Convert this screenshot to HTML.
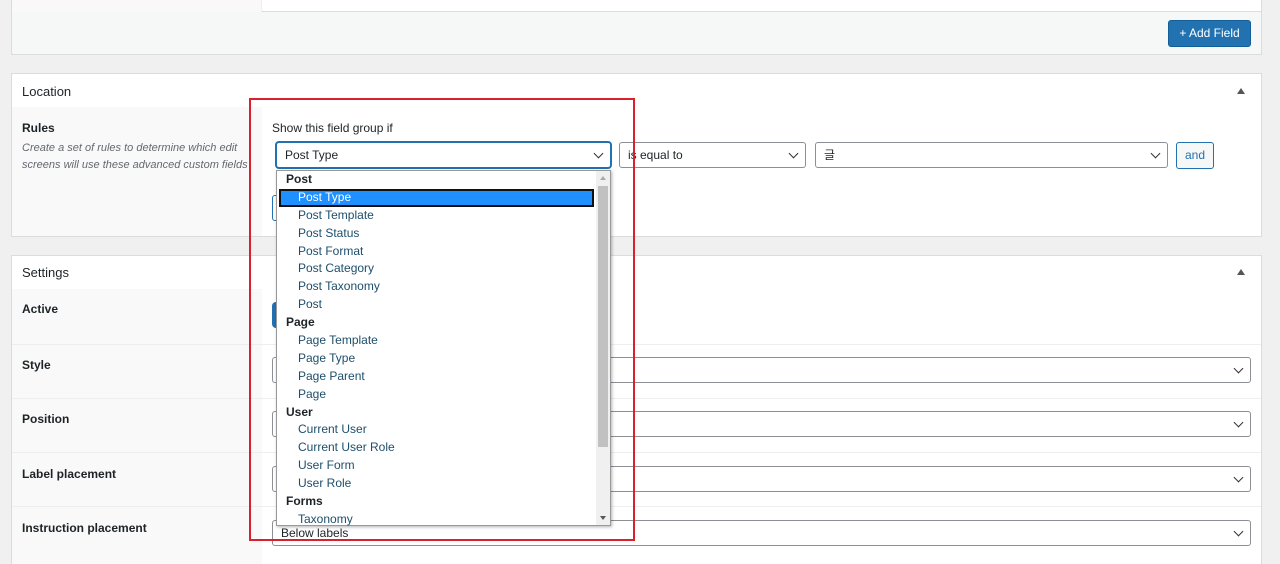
<!DOCTYPE html>
<html style="overflow:hidden;height:564px"><head><meta charset="utf-8"><style>
*{box-sizing:border-box;margin:0;padding:0}
body{width:1280px;height:564px;overflow:hidden;background:#f0f0f1;font-family:"Liberation Sans","Noto Sans CJK KR",sans-serif;font-size:12px;color:#1d2327;position:relative}
.abs{position:absolute}
.panel{position:absolute;left:11px;width:1251px;background:#fff;border:1px solid #dcdcde}
.lbl{position:absolute;left:22px;font-weight:bold;font-size:12px}
.sel{position:absolute;height:26px;border:1px solid #8c8f94;border-radius:3px;background:#fff;padding-left:8px;line-height:24px;font-size:12px}
.sel:after{content:"";position:absolute;right:8px;top:7px;width:6px;height:6px;border-right:1px solid #333;border-bottom:1px solid #333;transform:rotate(45deg)}
.row{position:absolute;left:0;width:1249px;border-top:1px solid #eee}
.leftcol{position:absolute;left:0;width:250px;background:#f9f9f9}
.dd{position:absolute;left:276px;top:170px;width:335px;height:356px;background:#fff;border:1px solid #999;box-shadow:1px 1px 3px rgba(0,0,0,.3);font-size:12px}
.dd div{height:17.9px;line-height:17.9px;padding-left:21px;color:#1d4e6b}
.dd div.g{padding-left:9px;font-weight:bold;color:#1d2327}
.tri{position:absolute;right:16px;width:0;height:0;border-left:4px solid transparent;border-right:4px solid transparent;border-bottom:6px solid #555}
</style></head><body>

<div class="panel" style="top:-2px;height:57px;background:#f6f7f7">
  <div class="abs" style="left:0;top:0;width:1249px;height:13px;background:#fff;border-bottom:1px solid #dcdcde"></div>
  <div class="abs" style="left:0;top:0;width:250px;height:13px;background:#f9f9f9;border-right:1px solid #eee"></div>
  <div class="abs" style="left:1156px;top:21px;width:83px;height:27px;background:#2271b1;border:1px solid #135e96;border-radius:3px;color:#fff;line-height:25px;text-align:center;font-size:12px">+ Add Field</div>
</div>

<div class="panel" style="top:73px;height:164px">
  <div class="abs" style="left:10px;top:10px;font-size:13px">Location</div>
  <div class="tri" style="top:14px"></div>
  <div class="leftcol" style="top:33px;height:129px"></div>
</div>
<div class="lbl" style="top:121px">Rules</div>
<div class="abs" style="left:22px;top:140px;font-style:italic;color:#646970;font-size:11px;line-height:17px;width:230px">Create a set of rules to determine which edit<br>screens will use these advanced custom fields</div>
<div class="abs" style="left:272px;top:121px;font-size:12px">Show this field group if</div>
<div class="sel" style="left:276px;top:142px;width:335px;border-color:#2271b1;box-shadow:0 0 0 1px #2271b1">Post Type</div>
<div class="sel" style="left:619px;top:142px;width:187px">is equal to</div>
<div class="sel" style="left:815px;top:142px;width:353px">글</div>
<div class="abs" style="left:1176px;top:142px;width:38px;height:27px;border:1px solid #2271b1;border-radius:3px;background:#f6f7f7;color:#2271b1;text-align:center;line-height:25px">and</div>
<div class="abs" style="left:272px;top:195px;width:8px;height:26px;border:1px solid #2271b1;border-radius:3px"></div>

<div class="panel" style="top:255px;height:309px;border-bottom:none">
  <div class="abs" style="left:10px;top:9px;font-size:13px">Settings</div>
  <div class="tri" style="top:13px"></div>
  <div class="leftcol" style="top:33px;height:290px"></div>
  <div class="row" style="top:88px"></div>
  <div class="row" style="top:142px"></div>
  <div class="row" style="top:196px"></div>
  <div class="row" style="top:250px"></div>
</div>
<div class="lbl" style="top:302px">Active</div>
<div class="lbl" style="top:358px">Style</div>
<div class="lbl" style="top:412px">Position</div>
<div class="lbl" style="top:467px">Label placement</div>
<div class="lbl" style="top:521px">Instruction placement</div>
<div class="abs" style="left:272px;top:302px;width:10px;height:26px;background:#2271b1;border-radius:4px"></div>
<div class="sel" style="left:272px;top:357px;width:979px"></div>
<div class="sel" style="left:272px;top:411px;width:979px"></div>
<div class="sel" style="left:272px;top:466px;width:979px"></div>
<div class="sel" style="left:272px;top:520px;width:979px;padding-left:8px">Below labels</div>

<div class="dd">
  <div class="g">Post</div>
  <div style="background:#1e90ff;color:#fff;outline:2px solid #111;outline-offset:-2px;margin:0 16px 0 2px;padding-left:19px">Post Type</div>
  <div>Post Template</div><div>Post Status</div><div>Post Format</div><div>Post Category</div><div>Post Taxonomy</div><div>Post</div>
  <div class="g">Page</div>
  <div>Page Template</div><div>Page Type</div><div>Page Parent</div><div>Page</div>
  <div class="g">User</div>
  <div>Current User</div><div>Current User Role</div><div>User Form</div><div>User Role</div>
  <div class="g">Forms</div>
  <div>Taxonomy</div>
  <span class="abs" style="right:0;top:0;width:14px;height:354px;background:#f0f0f0"></span>
  <span class="abs" style="right:2px;top:15px;width:10px;height:261px;background:#c1c1c1"></span>
  <span class="abs" style="right:4px;top:5px;border-left:3px solid transparent;border-right:3px solid transparent;border-bottom:4px solid #aaa"></span>
  <span class="abs" style="right:4px;bottom:5px;border-left:3px solid transparent;border-right:3px solid transparent;border-top:4px solid #555"></span>
</div>

<div class="abs" style="left:249px;top:98px;width:386px;height:443px;border:2px solid #d9202c"></div>
</body></html>
